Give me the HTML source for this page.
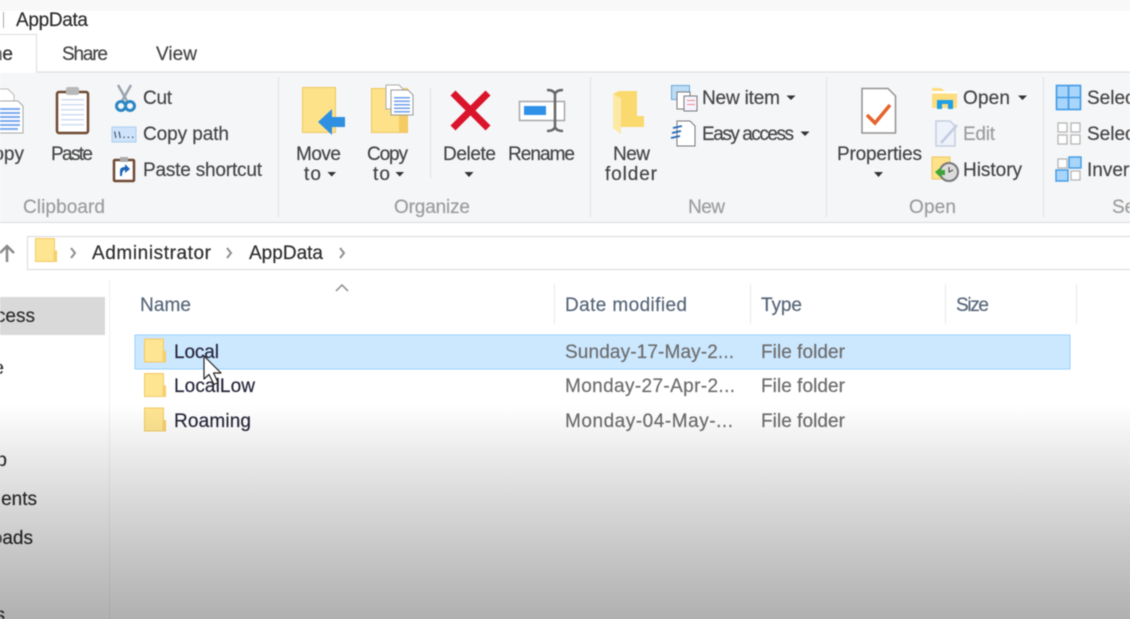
<!DOCTYPE html>
<html lang="en"><head><meta charset="utf-8"><title>AppData</title>
<style>
html,body{margin:0;padding:0;background:#fff;width:1130px;height:619px;overflow:hidden}
svg{display:block;position:absolute;left:0;top:0;filter:blur(.5px)}
#shade{position:absolute;left:0;top:0;width:1130px;height:619px;pointer-events:none;
background:linear-gradient(to bottom,rgba(0,0,0,0) 0,rgba(0,0,0,0) 405px,rgba(0,0,0,.06) 440px,rgba(0,0,0,.12) 482px,rgba(0,0,0,.22) 550px,rgba(0,0,0,.31) 619px)}
text{font-family:"Liberation Sans",Arial,sans-serif;font-size:19px;fill:#444;stroke:#444;stroke-width:.18px}
.d{fill:#2c2c2c;stroke:#2c2c2c}.g{fill:#9c9c9c;stroke:#9c9c9c}.h{fill:#566578;stroke:#566578}.r{fill:#6c6c6c;stroke:#6c6c6c}.n{fill:#25253a;stroke:#25253a}
</style></head><body>
<svg width="1130" height="619" viewBox="0 0 1130 619" xmlns="http://www.w3.org/2000/svg">
<defs>
<g id="fld"><path d="M.5 .5H19.500V13H21.500V23.500H.5Z" fill="#fee592" stroke="#f2ca66"/><path d="M18.500 13H21.500V23.500H18.500Z" fill="#f7d06c"/></g>
</defs>
<rect width="1130" height="619" fill="#fff"/>
<rect width="1130" height="11" fill="#f8f8f8"/>
<rect x="3" y="12" width="1" height="16" fill="#aaa"/>
<text class="d" x="16" y="26" textLength="72">AppData</text>

<!-- tabs and ribbon -->
<rect x="0" y="72" width="1130" height="150" fill="#f5f6f8"/>
<rect x="0" y="71.500" width="1130" height="1" fill="#dadbdc"/>
<rect x="0" y="222" width="1130" height="1" fill="#dadbdc"/>
<path d="M0 35H36V73H0Z" fill="#fff"/><path d="M0 34.500H36.500V72" fill="none" stroke="#dadbdc"/>
<text class="d" x="13" y="60" text-anchor="end">Home</text>
<text x="62" y="60" textLength="46">Share</text>
<text x="156" y="60" textLength="41">View</text>

<!-- clipboard -->
<path d="M-2 89H8L14 95V104H-2Z" fill="#fff" stroke="#bbb"/>
<path d="M-6 101H18L23 106V133H-6Z" fill="#fff" stroke="#a8a8a8"/>
<g fill="#7aa8ee"><rect x="0" y="108" width="20" height="2"/><rect x="0" y="112" width="20" height="2"/><rect x="0" y="116" width="20" height="2"/><rect x="0" y="120" width="20" height="2"/><rect x="0" y="124" width="20" height="2"/><rect x="0" y="128" width="18" height="2"/></g>
<text x="24" y="160" text-anchor="end">Copy</text>
<rect x="57" y="92" width="31" height="41" rx="2" fill="#fff" stroke="#6e4a32" stroke-width="2.500"/>
<rect x="66" y="87" width="13" height="8" rx="2" fill="#b8b8b8"/>
<g fill="#cfdcf3"><rect x="61" y="99" width="23" height="1.500"/><rect x="61" y="104" width="23" height="1.500"/><rect x="61" y="109" width="23" height="1.500"/><rect x="61" y="114" width="23" height="1.500"/><rect x="61" y="119" width="23" height="1.500"/><rect x="61" y="124" width="23" height="1.500"/></g>
<text x="51" y="160" textLength="42">Paste</text>
<path d="M131 85L122 101M118 85L127 101" stroke="#9aa4ae" stroke-width="2.500" fill="none"/>
<circle cx="121" cy="106" r="4.500" fill="none" stroke="#2b87c4" stroke-width="3"/><circle cx="130" cy="106" r="4.500" fill="none" stroke="#2b87c4" stroke-width="3"/>
<rect x="112" y="127" width="24" height="15" fill="#cfe4fa" stroke="#a8cdf0"/>
<text x="114" y="138" style="font-size:9px;font-weight:bold;fill:#33435a;stroke:none" textLength="20">\\...</text>
<rect x="114" y="160" width="20" height="21" rx="1" fill="#fff" stroke="#6e4a32" stroke-width="2.500"/>
<rect x="120" y="157" width="8" height="5" fill="#aaa"/>
<path d="M120 176V171C120 168 122 167 125 167V164L130 169L125 173V170C123 170 122 172 122 176Z" fill="#1f66b8"/>
<text x="143" y="104" textLength="29">Cut</text>
<text x="143" y="140" textLength="86">Copy path</text>
<text x="143" y="176" textLength="119">Paste shortcut</text>
<text class="g" x="23" y="213" textLength="82">Clipboard</text>
<rect x="278" y="77" width="1" height="140" fill="#e0e1e3"/>

<!-- organize -->
<rect x="302.500" y="87.500" width="33" height="45" fill="#fde28a" stroke="#f0c65e"/>
<path d="M318 122L332 109V117H345V127H332V135Z" fill="#2f8fe0"/>
<text x="296" y="160" textLength="45">Move</text>
<text x="304" y="180" textLength="17">to</text>
<path d="M327.500 172H336L331.750 176.500Z" fill="#333"/>
<rect x="371.500" y="88.500" width="36" height="44" fill="#fde28a" stroke="#f0c65e"/>
<rect x="399" y="104" width="8" height="28" fill="#f5cc64"/>
<path d="M386 85H399L403 89V109H386Z" fill="#fff" stroke="#aaa"/>
<path d="M391 90H408L413 95V115H391Z" fill="#fff" stroke="#999"/>
<g fill="#6f9fe8"><rect x="394" y="97" width="16" height="1.500"/><rect x="394" y="100.500" width="16" height="1.500"/><rect x="394" y="104" width="16" height="1.500"/><rect x="394" y="107.500" width="16" height="1.500"/><rect x="394" y="111" width="16" height="1.500"/></g>
<text x="367" y="160" textLength="41">Copy</text>
<text x="373" y="180" textLength="17">to</text>
<path d="M395.500 172H404L399.750 176.500Z" fill="#333"/>
<rect x="430" y="88" width="1" height="90" fill="#dfe0e2"/>
<path d="M453 93L488 128M488 93L453 128" stroke="#d9142b" stroke-width="7" fill="none"/>
<text x="443" y="160" textLength="53">Delete</text>
<path d="M464.500 172H473.500L469 177Z" fill="#333"/>
<rect x="519.500" y="101.500" width="45" height="19" fill="#fff" stroke="#a8a8a8" stroke-width="1.500"/>
<rect x="524" y="106" width="22" height="9" fill="#2f91e8"/>
<path d="M547 90C551 90 554 91 555 94V127C554 130 551 131 547 131M563 90C559 90 556 91 555 94M563 131C559 131 556 130 555 127" fill="none" stroke="#666" stroke-width="2.500"/>
<text x="508" y="160" textLength="67">Rename</text>
<text class="g" x="394" y="213" textLength="76">Organize</text>
<rect x="590" y="77" width="1" height="140" fill="#e0e1e3"/>

<!-- new -->
<path d="M637 91V116H644V127H621V134L613 128V94L619 91Z" fill="#fad96f"/>
<path d="M613 94L621 98V134L613 128Z" fill="#fce9a6"/>
<text x="613" y="160" textLength="37">New</text>
<text x="605" y="180" textLength="52">folder</text>
<rect x="671.500" y="85.500" width="18" height="14" fill="#bcdcf6" stroke="#6ba8d8"/>
<rect x="677" y="92" width="13" height="17" fill="#fff" stroke="#777"/>
<rect x="684" y="96" width="13" height="15" fill="#f5f5ff" stroke="#777"/>
<g fill="#e88"><rect x="687" y="100" width="8" height="1"/><rect x="687" y="104" width="8" height="1"/></g>
<text x="702" y="104" textLength="78">New item</text>
<path d="M786.500 95.500H795.500L791 100Z" fill="#333"/>
<path d="M677 121H690L695 126V146H677Z" fill="#fff" stroke="#777"/>
<path d="M673 128L682 126M672 133L681 131M671 138L680 136" stroke="#2469b5" stroke-width="1.800" fill="none"/>
<text x="702" y="140" textLength="92">Easy access</text>
<path d="M800.500 131.500H809.500L805 136Z" fill="#333"/>
<text class="g" x="688" y="213" textLength="37">New</text>
<rect x="826" y="77" width="1" height="140" fill="#e0e1e3"/>

<!-- open -->
<path d="M862 88.500H888L895.500 96V133H862Z" fill="#fff" stroke="#929292" stroke-width="1.500"/>
<path d="M867 115L875 123L890 105" fill="none" stroke="#e5632c" stroke-width="3.500"/>
<text x="837" y="160" textLength="85">Properties</text>
<path d="M874 172H883L878.500 177Z" fill="#333"/>
<path d="M932 88H941L945 91H957V108H932Z" fill="#fddd7e"/>
<rect x="932" y="91" width="25" height="2.500" fill="#fff"/>
<path d="M937 109V100H953V109H948V104H942V109Z" fill="#1f9fe6"/>
<text x="963" y="104" textLength="47">Open</text>
<path d="M1018 95.500H1027L1022.500 100Z" fill="#333"/>
<path d="M936 121H950L955 126V146H936Z" fill="#eef2fa" stroke="#c3cde0" stroke-width="1.500"/>
<path d="M941 143L957 125" stroke="#c3cde0" stroke-width="2.500"/>
<text class="g" x="963" y="140" textLength="32">Edit</text>
<rect x="932" y="157" width="18" height="22" fill="#fde28a" stroke="#f0c65e"/>
<circle cx="949" cy="172" r="9" fill="#dcdcdc" stroke="#777" stroke-width="2"/>
<path d="M949 167V172L953 170" stroke="#444" fill="none"/>
<path d="M935 172L941 167V170H945V175H941V178Z" fill="#3fa53a"/>
<text x="963" y="176" textLength="59">History</text>
<text class="g" x="909" y="213" textLength="47">Open</text>
<rect x="1043" y="77" width="1" height="140" fill="#e0e1e3"/>

<!-- select -->
<rect x="1056.500" y="85.500" width="24" height="24" fill="#a9d5fb" stroke="#3f9ae4" stroke-width="1.600"/>
<path d="M1068.500 85V110M1056 97.500H1081" stroke="#3f9ae4" stroke-width="1.600"/>
<g fill="#fff" stroke="#b5b5b5" stroke-width="1.300">
<rect x="1058" y="123" width="9" height="9"/><rect x="1071" y="123" width="9" height="9"/><rect x="1058" y="135" width="9" height="9"/><rect x="1071" y="135" width="9" height="9"/>
<rect x="1058" y="159" width="9" height="9"/><rect x="1071" y="171" width="9" height="9"/></g>
<g fill="#a9d5fb" stroke="#3f9ae4" stroke-width="1.400"><rect x="1069" y="157" width="12" height="11"/><rect x="1056" y="170" width="12" height="11"/></g>
<text x="1087" y="104">Select all</text>
<text x="1087" y="140">Select none</text>
<text x="1087" y="176">Invert selection</text>
<text class="g" x="1112" y="213">Select</text>

<!-- address -->
<path d="M7 262V247M0 253L7 246L14 253" fill="none" stroke="#8a8a8a" stroke-width="2.500"/>
<rect x="27.500" y="236.500" width="1110" height="33" fill="#fff" stroke="#d9d9d9"/>
<use href="#fld" transform="translate(35 238)"/>
<path d="M71 248L75 253L71 258" fill="none" stroke="#8f8f8f" stroke-width="2"/>
<text class="d" x="92" y="259" textLength="119">Administrator</text>
<path d="M227 248L231 253L227 258" fill="none" stroke="#8f8f8f" stroke-width="2"/>
<text class="d" x="249" y="259" textLength="74">AppData</text>
<path d="M340 248L344 253L340 258" fill="none" stroke="#8f8f8f" stroke-width="2"/>

<!-- sidebar -->
<rect x="0" y="297" width="105" height="38" fill="#d9d9d9"/>
<rect x="109" y="280" width="1" height="339" fill="#f0f0f0"/>
<text class="d" x="35" y="322" text-anchor="end">Quick access</text>
<text class="d" x="4" y="374" text-anchor="end">OneDrive</text>
<text class="d" x="7" y="466" text-anchor="end">Desktop</text>
<text class="d" x="37" y="505" text-anchor="end">Documents</text>
<text class="d" x="33" y="544" text-anchor="end">Downloads</text>
<text class="d" x="5" y="621" text-anchor="end">Pictures</text>

<!-- headers -->
<path d="M336 291L342 285L348 291" fill="none" stroke="#8a8a8a" stroke-width="1.500"/>
<text class="h" x="140" y="311" textLength="51">Name</text>
<text class="h" x="565" y="311" textLength="122">Date modified</text>
<text class="h" x="761" y="311" textLength="41">Type</text>
<text class="h" x="956" y="311" textLength="33">Size</text>
<g fill="#e8e8e8"><rect x="554" y="284" width="1" height="40"/><rect x="750" y="284" width="1" height="40"/><rect x="945" y="284" width="1" height="40"/><rect x="1076" y="284" width="1" height="40"/></g>

<!-- rows -->
<rect x="135" y="335" width="935" height="34" fill="#cce8ff" stroke="#99d1ff"/>
<use href="#fld" transform="translate(144 338.500)"/>
<use href="#fld" transform="translate(144 373)"/>
<use href="#fld" transform="translate(144 407.500)"/>
<text class="n" x="174" y="358" textLength="45">Local</text>
<text class="n" x="174" y="392" textLength="81">LocalLow</text>
<text class="n" x="174" y="427" textLength="77">Roaming</text>
<text class="r" x="565" y="358" textLength="169">Sunday-17-May-2...</text>
<text class="r" x="565" y="392" textLength="170">Monday-27-Apr-2...</text>
<text class="r" x="565" y="427" textLength="168">Monday-04-May-...</text>
<text class="r" x="761" y="358" textLength="84">File folder</text>
<text class="r" x="761" y="392" textLength="84">File folder</text>
<text class="r" x="761" y="427" textLength="84">File folder</text>

<!-- cursor -->
<path d="M204 356V379L209 374.500L214 384.500L218 382.500L213.500 373H221Z" fill="#fff" stroke="#222" stroke-width="1.200" stroke-linejoin="round"/>
</svg>
<div id="shade"></div>
</body></html>
